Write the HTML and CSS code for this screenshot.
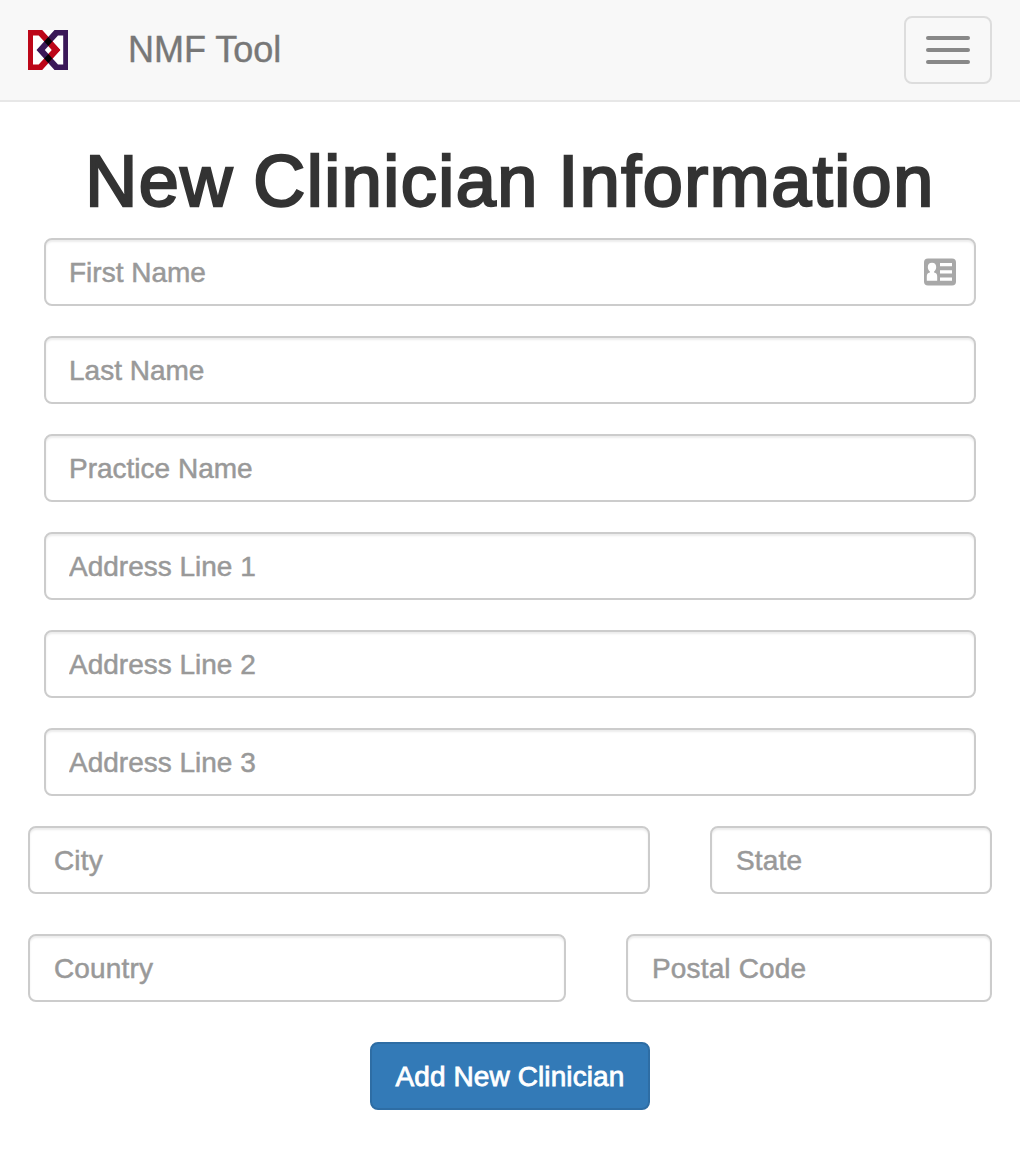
FILE: index.html
```html
<!DOCTYPE html>
<html lang="en">
<head>
<meta charset="utf-8">
<title>NMF Tool</title>
<link rel="stylesheet" href="styles.css">
</head>
<body>
<nav class="navbar">
  <svg class="logo" viewBox="0 0 40 40" width="40" height="40" aria-hidden="true">
    <path fill="#fff" d="M0 0H40V40H0Z"/>
    <path fill="#bd0719" d="M0 0H14.200L32.300 20 14.200 40H0V34.500H10.700L24 20 10.700 5.500H5V34.500H0Z"/>
    <path fill="#3b1858" d="M40 0H26.500L8.500 20 26.500 40H40V34.500H30L16.800 20 30 5.500H35.200V34.500H40Z"/>
    <path fill="#bd0719" d="M20.400 7 32.300 20 20.400 33V24L24 20 20.400 16Z"/>
    <path fill="#050006" d="M20.400 7 24.400 11.500 20.400 16 16.200 11.500ZM20.400 24 24.400 28.500 20.400 33 16.200 28.500Z"/>
  </svg>
  <a class="brand">NMF Tool</a>
  <button class="toggle" aria-label="Toggle navigation"><span class="bar"></span><span class="bar"></span><span class="bar"></span></button>
</nav>
<main class="page">
  <h1 class="title">New Clinician Information</h1>
  <form class="form">
    <div class="stack">
      <div class="field">
        <input class="input" type="text" placeholder="First Name">
        <svg class="card" viewBox="0 0 32 28" width="32" height="28" aria-hidden="true">
          <rect y=".5" width="32" height="27" rx="4" fill="#a8a8a8"/>
          <path fill="#fff" d="M8 4.700C10.600 4.700 12.200 6.300 12.200 8.900C12.200 11 11.200 12.600 10.100 13.400V14.400C12.400 15 13.200 16 13.200 18.500V22.800H2.800V18.500C2.800 16 3.600 15 5.900 14.400V13.400C4.800 12.600 3.800 11 3.800 8.900C3.800 6.300 5.400 4.700 8 4.700ZM16 5H28V8.300H16ZM16 12.300H28V15.400H16ZM16 19.600H28V22.700H16Z"/>
        </svg>
      </div>
      <input class="input" type="text" placeholder="Last Name">
      <input class="input" type="text" placeholder="Practice Name">
      <input class="input" type="text" placeholder="Address Line 1">
      <input class="input" type="text" placeholder="Address Line 2">
      <input class="input" type="text" placeholder="Address Line 3">
    </div>
    <div class="row row-city">
      <input class="input" type="text" placeholder="City">
      <input class="input" type="text" placeholder="State">
    </div>
    <div class="row row-country">
      <input class="input" type="text" placeholder="Country">
      <input class="input" type="text" placeholder="Postal Code">
    </div>
    <button class="submit" type="button">Add New Clinician</button>
  </form>
</main>
</body>
</html>
```
FILE: styles.css
```css
* { box-sizing: border-box; }
body {
  margin: 0;
  background: #fff;
  color: #333;
  font: 28px/40px "Liberation Sans", Arial, sans-serif;
}
.navbar {
  display: flex;
  align-items: center;
  height: 102px;
  padding: 0 28px;
  border-bottom: 2px solid #e7e7e7;
  background: #f8f8f8;
}
.brand {
  margin-left: 60px;
  color: #777;
  font-size: 36px;
  -webkit-text-stroke: 0.4px #777;
}
.toggle {
  display: flex;
  flex-direction: column;
  justify-content: center;
  align-items: center;
  gap: 8px;
  width: 88px;
  height: 68px;
  margin-left: auto;
  padding: 0;
  border: 2px solid #ddd;
  border-radius: 8px;
  background: transparent;
}
.bar { width: 44px; height: 4px; border-radius: 2px; background: #888; }
.page { padding: 39px 28px 0; }
.title {
  margin: 0 0 17px;
  font-size: 72px;
  font-weight: 400;
  line-height: 80px;
  text-align: center;
  white-space: nowrap;
  letter-spacing: 1.48px;
  word-spacing: -2px;
  -webkit-text-stroke: 2.4px #333;
}
.form { display: flex; flex-direction: column; }
.stack { display: flex; flex-direction: column; gap: 30px; padding: 0 16px; }
.field { position: relative; display: flex; }
.input {
  width: 100%;
  height: 68px;
  padding: 1px 24px 0 23px;
  border: 2px solid #ccc;
  border-radius: 8px;
  background: #fff;
  box-shadow: inset 0 2px 2px rgba(0, 0, 0, .075);
  color: #555;
  font: inherit;
}
.input::placeholder { color: #999; opacity: 1; -webkit-text-stroke: 0.5px #999; }
.card { position: absolute; top: 20px; right: 20px; }
.row { display: grid; column-gap: 60px; }
.row .input { padding-left: 24px; letter-spacing: .15px; }
.row-city { grid-template-columns: 622px 282px; margin-top: 30px; }
.row-country { grid-template-columns: 538px 366px; margin-top: 40px; }
.submit {
  align-self: center;
  width: 280px;
  height: 68px;
  margin-top: 40px;
  padding: 1px 0 0;
  border: 2px solid #2e6da4;
  border-radius: 8px;
  background: #337ab7;
  color: #fff;
  font: inherit;
  letter-spacing: .1px;
  white-space: nowrap;
  -webkit-text-stroke: 0.8px #fff;
}
```
